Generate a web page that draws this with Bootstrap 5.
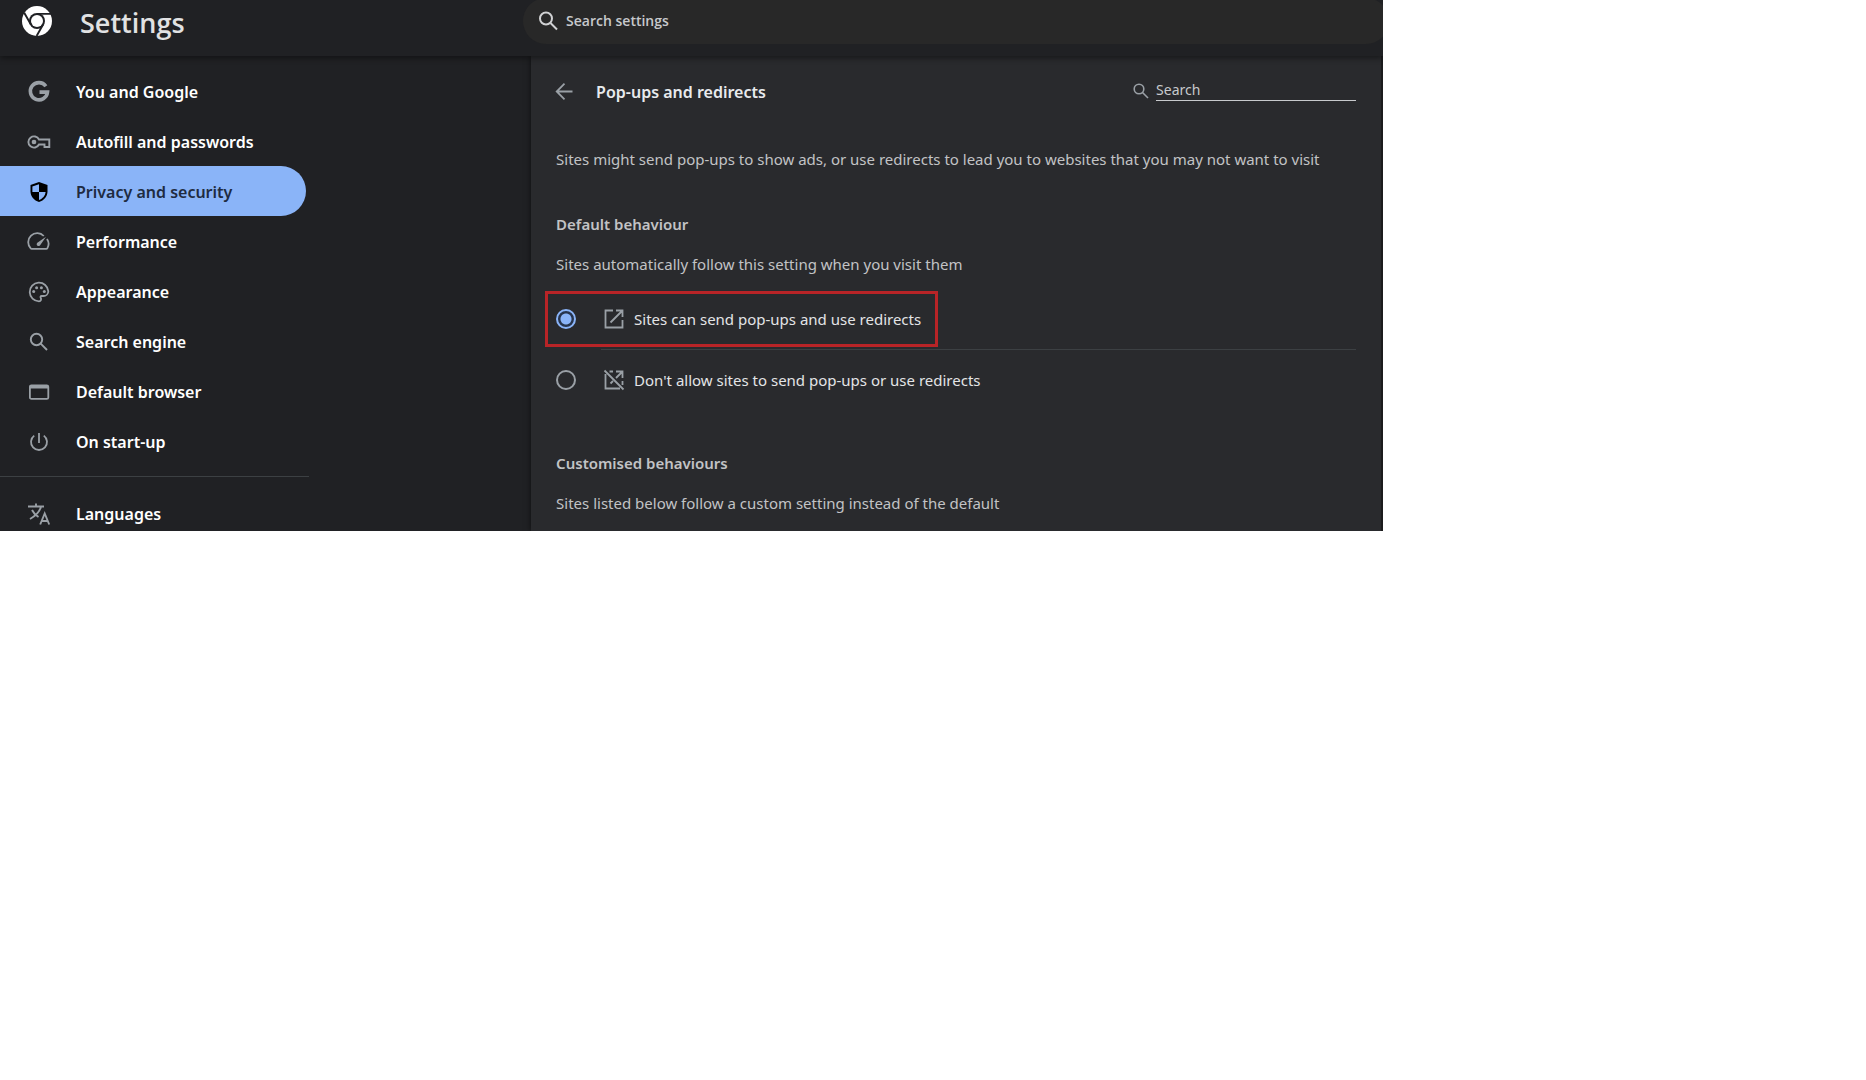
<!DOCTYPE html>
<html lang="en-GB">
<head>
<meta charset="utf-8">
<meta name="viewport" content="width=device-width, initial-scale=1">
<title>Settings - Pop-ups and redirects</title>
<link href="https://cdn.jsdelivr.net/npm/bootstrap@5.3.0/dist/css/bootstrap.min.css" rel="stylesheet">
<style>
body { background: #fff; font-family: "Noto Sans", "Open Sans", sans-serif; font-size: 15px; line-height: 20px; color: #e3e3e3; }
.settings-app { width: 74.12%; background: #202124; }
.brand-side, .side-col { flex: 0 0 38.4%; }
.top-bar { height: 56px; box-shadow: 0 2px 6px rgba(0,0,0,.45); z-index: 2; background: #202124; }
.brand-title { font-family: "Open Sans", "Noto Sans", sans-serif; font-size: 27px; line-height: 32px; font-weight: 600; color: #e1e2e3; }
.brand-side { padding-left: 22px; gap: 28px; height: 46px; }
.search-pill { height: 46px; margin: -2px -6px 0 -8px; border-radius: 23px; background: #282828; padding: 0 14px; gap: 7px; }
.plain-input { background: transparent; border: 0; outline: 0; padding: 0; color: #c7c9cc; min-width: 0; }
.plain-input::placeholder { color: #c7c9cc; opacity: 1; }
.search-pill .plain-input { font-family: "Open Sans", "Noto Sans", sans-serif; font-size: 14px; font-weight: 600; }
.side-col { padding-top: 10px; }
.side-menu { width: 309px; max-width: 100%; }
.side-menu .nav-link { height: 50px; margin-right: 3px; padding: 1px 27px 0; gap: 25px; color: #fff; font-size: 16px; line-height: 22px; font-weight: 600; border-radius: 0 25px 25px 0; }
.side-menu .nav-link svg { color: #9aa0a6; }
.side-menu .nav-link.active { background: #8ab4f8; color: #202b41; }
.side-menu .nav-link.active svg { color: #000; }
.side-menu .nav-link.last-link { height: 40px; padding-top: 5px; }
.side-rule { height: 1px; background: #3c4043; margin: 10px 0 14px; }
.main-panel { background: #292a2d; padding: 20px 25px 17px; box-shadow: 0 0 6px rgba(0,0,0,.6); border-right: 2px solid #1b1b1d; }
.panel-head { height: 30px; gap: 20px; }
.back-btn { border: 0; background: none; padding: 0; color: #9aa0a6; width: 20px; margin-left: -2px; display: flex; }
.panel-title { font-size: 16px; line-height: 20px; font-weight: 600; color: #e8eaed; margin: 0 auto 0 0; padding: 1px 0 0 2px; }
.find-box { gap: 5px; color: #9aa0a6; }
.find-box .plain-input { width: 200px; height: 20px; padding-bottom: 2px; font-size: 14px; border-bottom: 1px solid #c7c9cc; }
.soft-text, .group-title { color: #c2c3c5; margin: 0; }
.intro-text { margin-top: 43px; }
.group-title { font-size: 15px; line-height: 20px; font-weight: 600; margin: 45px 0 20px; }
.choice-list { margin-top: 17px; }
.choice-row { height: 56px; gap: 26px; padding: 0 14px 0 8px; margin-left: -11px; border: 3px solid transparent; width: fit-content; max-width: 100%; }
.choice-row.flagged { border-color: #b82427; }
.choice-row input { appearance: none; width: 20px; height: 20px; margin: 0; border: 2px solid #9aa0a6; border-radius: 50%; flex: none; }
.choice-row input:checked { border-color: #8ab4f8; background: radial-gradient(circle, #8ab4f8 5px, #26344d 6px); }
.choice-row label { gap: 8px; color: #e3e4e6; }
.choice-row svg { color: #9aa0a6; flex: none; }
.choice-rule { height: 1px; background: #3c4043; margin: 2px 0 2px 45px; }
</style>
</head>
<body>
<div class="settings-app overflow-hidden">
  <header class="top-bar d-flex position-relative">
    <div class="brand-side d-flex align-items-center">
      <svg class="mb-1" width="30" height="30" viewBox="0 0 30 30" aria-hidden="true">
        <circle cx="15" cy="15" r="15" fill="#fff"/>
        <circle cx="15" cy="15" r="8" fill="#202124"/>
        <circle cx="15" cy="15" r="6" fill="#fff"/>
        <path d="M15 7.900H29M8.900 18.500L2.200 6.800M21.100 18.500L14.600 30" stroke="#202124" stroke-width="1.900" fill="none"/>
      </svg>
      <h1 class="brand-title m-0">Settings</h1>
    </div>
    <label class="search-pill d-flex align-items-center flex-grow-1">
      <svg width="22" height="22" viewBox="0 0 22 22" fill="none" stroke="#d0d1d3" stroke-width="2" aria-hidden="true"><circle cx="9" cy="8.500" r="6"/><path d="M13.500 13l6.500 6.500"/></svg>
      <input class="plain-input flex-grow-1" type="search" placeholder="Search settings" aria-label="Search settings">
    </label>
  </header>
  <div class="d-flex">
    <div class="side-col">
      <nav class="side-menu nav flex-column flex-nowrap" aria-label="Settings sections">
        <a class="nav-link d-flex align-items-center" href="#"><svg width="24" height="24" viewBox="0 0 24 24" fill="none" stroke="currentColor" stroke-width="3.600" aria-hidden="true"><path d="M18.900 6.200A8.600 8.600 0 1 0 20.500 12.100H12.500"/></svg>You and Google</a>
        <a class="nav-link d-flex align-items-center" href="#"><svg width="24" height="24" viewBox="0 0 24 24" fill="none" stroke="currentColor" stroke-width="1.900" aria-hidden="true"><path d="M12 9.500H22.300V17H17.500V14.500H12A5.600 5.600 0 1 1 12 9.500Z"/><circle cx="7" cy="12" r="1.400" fill="currentColor"/></svg>Autofill and passwords</a>
        <a class="nav-link active d-flex align-items-center" aria-current="page" href="#"><svg width="24" height="24" viewBox="0 0 24 24" aria-hidden="true"><path d="M12 2L20.500 5V11.500C20.500 16.500 17 20.500 12 22C7 20.500 3.500 16.500 3.500 11.500V5Z" fill="currentColor"/><path d="M12 4.200V12H5.400V6.500ZM12 12H18.600C18.200 15.700 15.700 18.700 12 20Z" fill="#8ab4f8"/></svg>Privacy and security</a>
        <a class="nav-link d-flex align-items-center" href="#"><svg width="24" height="24" viewBox="0 0 24 24" fill="none" stroke="currentColor" stroke-width="1.800" aria-hidden="true"><path d="M16.800 6A9 9 0 0 0 3.700 18.400Q4 18.900 4.600 18.900H19.400Q20 18.900 20.300 18.400A9 9 0 0 0 20 8.900"/><path d="M19 6.800L13.300 15A1.900 1.900 0 1 1 10.700 12.500Z" fill="currentColor" stroke="none"/></svg>Performance</a>
        <a class="nav-link d-flex align-items-center" href="#"><svg width="24" height="24" viewBox="0 0 24 24" fill="currentColor" aria-hidden="true"><path d="M12 21.300A9.300 9.300 0 1 1 21.300 11.200C21.300 14 19 16 16.500 16H14.600C13.500 16 13.200 17.100 13.700 17.800C14.600 19.300 13.900 21.300 12 21.300Z" fill="none" stroke="currentColor" stroke-width="1.800"/><circle cx="6.700" cy="11.500" r="1.500"/><circle cx="9.600" cy="7.700" r="1.500"/><circle cx="14.400" cy="7.700" r="1.500"/><circle cx="17.300" cy="11.500" r="1.500"/></svg>Appearance</a>
        <a class="nav-link d-flex align-items-center" href="#"><svg width="24" height="24" viewBox="0 0 24 24" fill="none" stroke="currentColor" stroke-width="1.900" aria-hidden="true"><circle cx="9.500" cy="9.500" r="5.700"/><path d="M13.700 13.700L20 20"/></svg>Search engine</a>
        <a class="nav-link d-flex align-items-center" href="#"><svg width="24" height="24" viewBox="0 0 24 24" fill="none" stroke="currentColor" stroke-width="1.800" aria-hidden="true"><rect x="2.900" y="5.300" width="18.400" height="13.600" rx="1.500"/><path d="M3 7H21" stroke-width="3"/></svg>Default browser</a>
        <a class="nav-link d-flex align-items-center" href="#"><svg width="24" height="24" viewBox="0 0 24 24" fill="none" stroke="currentColor" stroke-width="1.800" aria-hidden="true"><path d="M12 3V13M7.200 5.600A8 8 0 1 0 16.800 5.600"/></svg>On start-up</a>
        <div class="side-rule" role="separator"></div>
        <a class="nav-link last-link d-flex align-items-center" href="#"><svg width="24" height="24" viewBox="0 0 24 24" fill="none" stroke="currentColor" stroke-width="1.900" aria-hidden="true"><path d="M1 4.500H17M9 1.500V4.500M14 4.500C13 9 9 13.500 3 17M5 8C6.500 11 9 13.500 11.500 15M13.200 22.500L17.700 11.500L22.200 22.500M14.500 19H21"/></svg>Languages</a>
      </nav>
    </div>
    <main class="main-panel flex-grow-1">
      <div class="panel-head d-flex align-items-center">
        <button class="back-btn" type="button" aria-label="Back"><svg width="20" height="20" viewBox="0 0 20 20" fill="none" stroke="currentColor" stroke-width="1.800" aria-hidden="true"><path d="M18.500 10.500H3M10.500 2.700L2.700 10.500L10.500 18.300"/></svg></button>
        <h2 class="panel-title">Pop-ups and redirects</h2>
        <label class="find-box d-flex align-items-center">
          <svg width="20" height="20" viewBox="0 0 20 20" fill="none" stroke="currentColor" stroke-width="1.600" aria-hidden="true"><circle cx="8" cy="8" r="4.800"/><path d="M11.500 11.500L17 17"/></svg>
          <input class="plain-input" type="search" placeholder="Search" aria-label="Search">
        </label>
      </div>
      <p class="soft-text intro-text">Sites might send pop-ups to show ads, or use redirects to lead you to websites that you may not want to visit</p>
      <h3 class="group-title">Default behaviour</h3>
      <p class="soft-text">Sites automatically follow this setting when you visit them</p>
      <div class="choice-list">
        <div class="choice-row flagged d-flex align-items-center">
          <input type="radio" name="popups" id="popAllow" checked>
          <label for="popAllow" class="d-flex align-items-center"><svg width="24" height="24" viewBox="0 0 24 24" fill="none" stroke="currentColor" stroke-width="1.800" aria-hidden="true"><path d="M11 3.500H3.500V20.500H20.500V13M14 3.500H20.500V10M20.500 3.500L8.500 15.500"/></svg>Sites can send pop-ups and use redirects</label>
        </div>
        <div class="choice-rule"></div>
        <div class="choice-row d-flex align-items-center">
          <input type="radio" name="popups" id="popBlock">
          <label for="popBlock" class="d-flex align-items-center"><svg width="24" height="24" viewBox="0 0 24 24" fill="none" stroke="currentColor" stroke-width="1.800" aria-hidden="true"><path d="M7.500 3.500H11M3.500 6V20.500H18M20.500 13V17M14 3.500H20.500V10M20.500 3.500L14 10M11 13L8.500 15.500M2.500 2.500L21.500 21.500"/></svg>Don't allow sites to send pop-ups or use redirects</label>
        </div>
      </div>
      <h3 class="group-title">Customised behaviours</h3>
      <p class="soft-text">Sites listed below follow a custom setting instead of the default</p>
    </main>
  </div>
</div>
<script src="https://cdn.jsdelivr.net/npm/bootstrap@5.3.0/dist/js/bootstrap.bundle.min.js"></script>
</body>
</html>
